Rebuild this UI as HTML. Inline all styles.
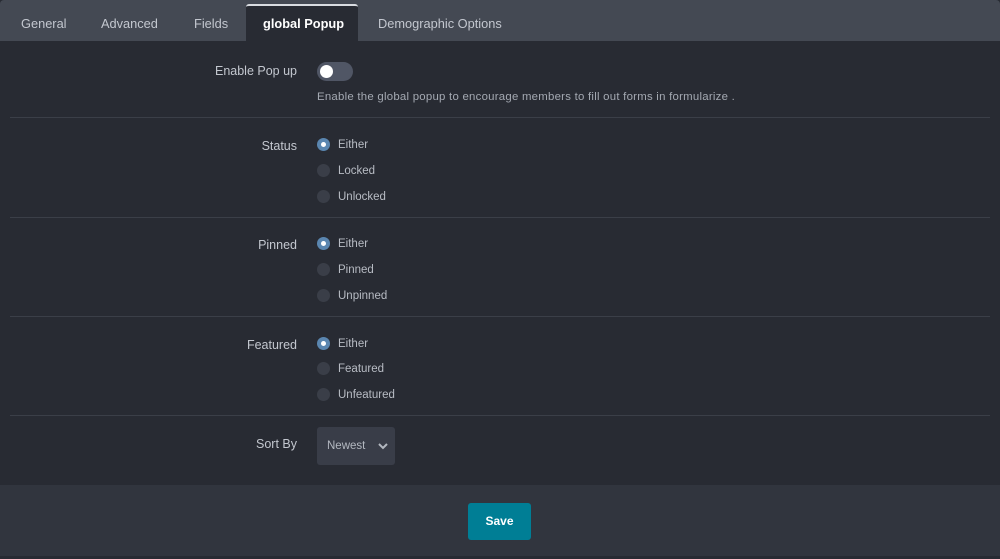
<!DOCTYPE html>
<html><head><style>
*{box-sizing:border-box;margin:0;padding:0}
body{width:1000px;height:559px;background:#282b33;font-family:"Liberation Sans",sans-serif;position:relative;overflow:hidden}
.tabs{position:absolute;left:0;top:0;width:1000px;height:41px;background:#444953;border-radius:4px 4px 0 0}
.tab{position:absolute;top:16px;font-size:12.8px;color:#c3c7cf}
.active{position:absolute;left:246px;top:4px;width:112px;height:37px;background:#282b33;border-top:2px solid #d9dce1;border-radius:3px 3px 0 0}
.active span{position:absolute;left:17px;top:10px;font-size:12.8px;font-weight:bold;color:#fff}
.lbl{position:absolute;right:703px;font-size:12.5px;color:#c3c7cf;text-align:right}
.sep{position:absolute;left:10px;width:980px;height:1px;background:#3b3f48}
.r{position:absolute;left:317px;width:13px;height:13px;border-radius:50%;background:#3a3e48}
.r.on{background:#5a86b0}
.r.on:after{content:"";position:absolute;left:4px;top:4px;width:5px;height:5px;border-radius:50%;background:#fff}
.rt{position:absolute;left:338px;font-size:11.5px;color:#b8bcc4}
.footer{position:absolute;left:0;top:485px;width:1000px;height:71px;background:#31353e}
</style></head><body>
<div class="tabs">
<span class="tab" style="left:21px">General</span>
<span class="tab" style="left:101px">Advanced</span>
<span class="tab" style="left:194px">Fields</span>
<span class="tab" style="left:378px">Demographic Options</span>
</div>
<div class="active"><span>global Popup</span></div>

<div class="lbl" style="top:64px">Enable Pop up</div>
<div style="position:absolute;left:317px;top:62px;width:36px;height:19px;border-radius:10px;background:#505665"><div style="position:absolute;left:3px;top:3px;width:13px;height:13px;border-radius:50%;background:#fff"></div></div>
<div style="position:absolute;left:317px;top:91px;font-size:11.4px;letter-spacing:0.25px;color:#a4a9b2">Enable the global popup to encourage members to fill out forms in formularize .</div>
<div class="sep" style="top:117px"></div>

<div class="lbl" style="top:139px">Status</div>
<div class="r on" style="top:138px"></div><div class="rt" style="top:139px">Either</div>
<div class="r" style="top:164px"></div><div class="rt" style="top:165px">Locked</div>
<div class="r" style="top:190px"></div><div class="rt" style="top:191px">Unlocked</div>
<div class="sep" style="top:217px"></div>

<div class="lbl" style="top:238px">Pinned</div>
<div class="r on" style="top:237px"></div><div class="rt" style="top:238px">Either</div>
<div class="r" style="top:263px"></div><div class="rt" style="top:264px">Pinned</div>
<div class="r" style="top:289px"></div><div class="rt" style="top:290px">Unpinned</div>
<div class="sep" style="top:316px"></div>

<div class="lbl" style="top:338px">Featured</div>
<div class="r on" style="top:337px"></div><div class="rt" style="top:338px">Either</div>
<div class="r" style="top:362px"></div><div class="rt" style="top:363px">Featured</div>
<div class="r" style="top:388px"></div><div class="rt" style="top:389px">Unfeatured</div>
<div class="sep" style="top:415px"></div>

<div class="lbl" style="top:437px">Sort By</div>
<div style="position:absolute;left:317px;top:427px;width:78px;height:38px;background:#393d48;border-radius:3px">
<span style="position:absolute;left:10px;top:13px;font-size:11.5px;color:#b3b8c0">Newest</span>
<svg style="position:absolute;left:61px;top:15px" width="10" height="8" viewBox="0 0 10 8"><path d="M1 2l4 4 4-4" stroke="#b3b8c0" stroke-width="2" fill="none"/></svg>
</div>

<div class="footer"></div>
<div style="position:absolute;left:468px;top:503px;width:63px;height:37px;background:#007e95;border-radius:3px;color:#fff;font-size:12px;font-weight:bold;text-align:center;line-height:37px">Save</div>
</body></html>
